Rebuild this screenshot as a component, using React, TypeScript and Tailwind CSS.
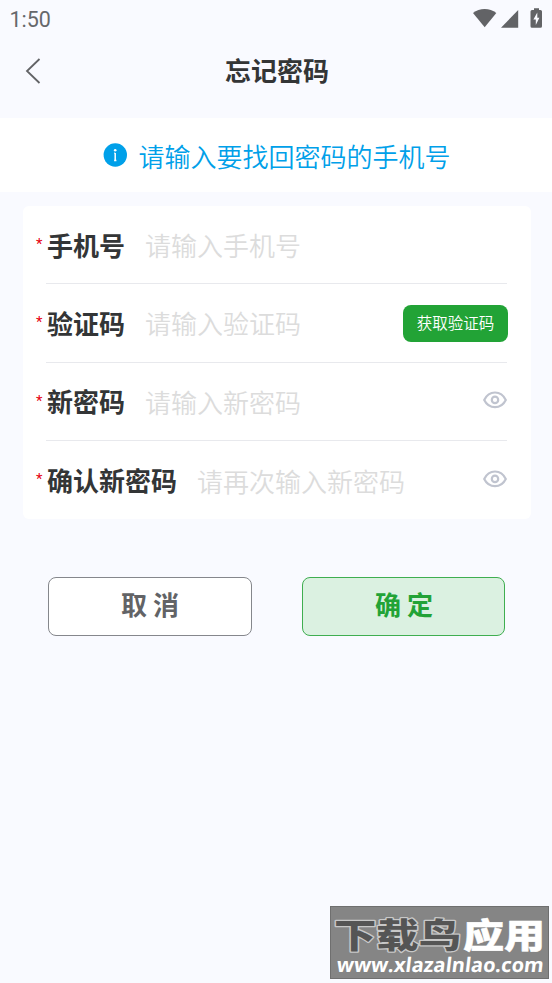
import { useState } from 'react'

type FieldProps = {
  label: string
  placeholder: string
  last?: boolean
  children?: React.ReactNode
  type?: string
}

function EyeIcon() {
  return (
    <svg width="24" height="18" viewBox="0 0 24 18" fill="none" stroke="#c0c4cf" strokeWidth="2.200">
      <path d="M1.2 9C3.5 4.2 7.4 1.5 12 1.5S20.500 4.200 22.800 9C20.500 13.600 16.600 16.200 12 16.200S3.500 13.600 1.200 9Z" strokeLinejoin="round" />
      <circle cx="12" cy="8.900" r="3.200" />
    </svg>
  )
}

function StatusBar() {
  return (
    <div className="flex h-[38px] items-center justify-between pl-[9.500px] pr-[9px]">
      <span className="pt-px font-[Roboto,sans-serif] text-[21.500px] leading-[38px] text-[#66686b]">1:50</span>
      <svg width="70" height="38" viewBox="473 0 70 38" fill="#626366">
        <path d="M473 13C479.500 7.700 489.800 7.700 496.300 13L484.700 27.200Z" />
        <path d="M518.200 10V27.700H501Z" />
        <path d="M534 8.200H539V10H540.500Q542 10 542 11.500V26.200Q542 27.700 540.500 27.700H532Q530.500 27.700 530.500 26.200V11.500Q530.500 10 532 10H534Z" />
        <path d="M537.300 12.500L533.400 19.500H535.800V25L539.400 17.800H537.300Z" fill="#f9faff" />
      </svg>
    </div>
  )
}

function Field({ label, placeholder, last, children, type = 'text' }: FieldProps) {
  return (
    <div className="flex h-[78.300px] pl-[13px] pr-6">
      <span className="w-[10px] shrink-0 pt-[28px] font-[Roboto,sans-serif] text-[15px] leading-[20px] text-[#e60012]">*</span>
      <div className={`flex min-w-0 flex-1 items-center ${last ? '' : 'border-b border-[#e8e9ed]'}`}>
        <label className="shrink-0 pl-px text-[26px] leading-[38px] font-bold text-[#333536]">{label}</label>
        <input
          type={type}
          placeholder={placeholder}
          className="ml-[20px] h-[40px] w-0 min-w-0 flex-1 bg-transparent text-[26px] font-[350] outline-none placeholder:text-[#dcdcdc]"
        />
        {children}
      </div>
    </div>
  )
}

export default function App() {
  const [visible, setVisible] = useState(false)
  const [confirmVisible, setConfirmVisible] = useState(false)

  return (
    <div className="relative h-[983px] w-[552px] overflow-hidden bg-[#f9faff] font-['Noto_Sans_CJK_SC',sans-serif]">
      <StatusBar />

      {/* Title bar */}
      <header className="grid h-20 grid-cols-[81px_1fr_79px] pt-[13px]">
        <button className="h-[40px] pl-[25px]" aria-label="返回">
          <svg width="16" height="28" viewBox="0 0 16 28" fill="none" stroke="#626366" strokeWidth="1.800">
            <path d="M14.500 2L2 14L14.500 26" />
          </svg>
        </button>
        <h1 className="text-center text-[26px] leading-[38px] font-bold text-[#333536]">忘记密码</h1>
      </header>

      {/* Notice */}
      <div className="flex h-[74px] items-center justify-center gap-[11px] bg-white pl-[2px] text-[26px] font-[350] text-[#00a0e9]">
        <svg width="24" height="24" viewBox="0 0 24 24">
          <circle cx="12.300" cy="12" r="11.700" fill="#00a0e9" />
          <path d="M12.200 10V18M11.200 10.300H12.200M11.100 17.600H13.400" stroke="#fff" strokeWidth="1.500" />
          <circle cx="12.200" cy="7.200" r="1.300" fill="#fff" />
        </svg>
        <span>请输入要找回密码的手机号</span>
      </div>

      <div className="mt-[14px] ml-[23px] h-[313px] w-[508px] rounded-md bg-white">
        <Field label="手机号" placeholder="请输入手机号" />
        <Field label="验证码" placeholder="请输入验证码">
          <button className="mt-[2px] -mr-px h-[37px] w-[105px] shrink-0 rounded-lg bg-[#22a336] pb-[2px] text-[15.500px] leading-[35px] font-[350] text-white">
            获取验证码
          </button>
        </Field>
        <Field label="新密码" placeholder="请输入新密码" type={visible ? 'text' : 'password'}>
          <button className="-mt-[2px]" onClick={() => setVisible(!visible)}>
            <EyeIcon />
          </button>
        </Field>
        <Field label="确认新密码" placeholder="请再次输入新密码" type={confirmVisible ? 'text' : 'password'} last>
          <button className="-mt-[2px]" onClick={() => setConfirmVisible(!confirmVisible)}>
            <EyeIcon />
          </button>
        </Field>
      </div>

      <div className="mt-[58px] flex gap-[50px] pl-12 text-[26px] font-bold">
        <button className="h-[59px] w-[204px] rounded-lg border border-[#85878c] bg-white pb-[6px] text-[#626366]">取 消</button>
        <button className="h-[59px] w-[203px] rounded-lg border border-[#3fae50] bg-[#dbf1e1] pb-[6px] pl-px text-[#22a336]">确 定</button>
      </div>

      {/* Site stamp */}
      <div className="absolute top-[906px] left-[330px] h-[73px] w-[219px] border border-[#6f6f6f] bg-[#858585]">
        <svg width="217" height="71" viewBox="331 907 217 71" paintOrder="stroke">
          <g fontSize="34" fontWeight="900" strokeLinejoin="round">
            <text x="334" y="948" textLength="127" lengthAdjust="spacingAndGlyphs" fill="#555" stroke="#c8c8c8" strokeWidth="2.500">下载鸟</text>
            <text x="463" y="948" textLength="82" lengthAdjust="spacingAndGlyphs" fill="#fff" stroke="#fff" strokeWidth=".5">应用</text>
          </g>
          <text
            transform="translate(336 972) skewX(-7)"
            textLength="207"
            lengthAdjust="spacingAndGlyphs"
            fontSize="20"
            fontWeight="700"
            fill="#fff"
            className="font-['Open_Sans',sans-serif]"
          >
            www.xlazalnlao.com
          </text>
        </svg>
      </div>
    </div>
  )
}
